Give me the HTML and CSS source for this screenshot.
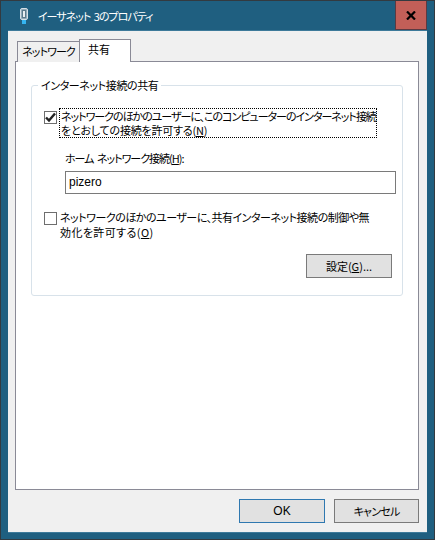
FILE: index.html
```html
<!DOCTYPE html>
<html lang="ja">
<head>
<meta charset="utf-8">
<title>イーサネット 3のプロパティ</title>
<link rel="stylesheet" href="styles.css">
</head>
<body>
<div class="window">
  <header class="titlebar">
    <svg class="app-icon" width="10" height="16" viewBox="0 0 10 16">
      <rect x="1.5" y="0.5" width="7" height="11" rx="1.5" fill="#8fa9b8" stroke="#d5dfe6"/>
      <rect x="3.5" y="2.5" width="3" height="7" fill="#e8eef2" stroke="#5c7a8c"/>
      <rect x="3" y="12" width="4" height="4" fill="#35b4f0"/>
    </svg>
    <span class="title">イーサネット 3のプロパティ</span>
    <button class="close" aria-label="閉じる">
      <svg width="10" height="9" viewBox="0 0 10 9"><path d="M1 0.5 9 8.5M9 0.5 1 8.5" stroke="#000" stroke-width="2.2" fill="none"/></svg>
    </button>
  </header>
  <main class="client">
    <div class="tabs">
      <div class="tab">ネットワーク</div>
      <div class="tab active">共有</div>
    </div>
    <section class="panel">
      <fieldset class="group">
        <legend class="legend">インターネット接続の共有</legend>
        <div class="check-row first">
          <span class="box"><svg width="11" height="11" viewBox="0 0 11 11"><path d="M1 5.5 4 8.5 10 1.5" stroke="#222" stroke-width="2.4" fill="none"/></svg></span>
          <span class="check-label focused"><span class="line-a">ネットワークのほかのユーザーに、このコンピューターのインターネット接続</span><br><span class="line-b">をとおしての接続を許可する(<u>N</u>)</span></span>
        </div>
        <div class="home">
          <div class="field-label">ホーム ネットワーク接続(<u>H</u>):</div>
          <div class="input">pizero</div>
        </div>
        <div class="check-row second">
          <span class="box"></span>
          <span class="check-label"><span class="line-c">ネットワークのほかのユーザーに、共有インターネット接続の制御や無</span><br><span class="line-d">効化を許可する(<u>O</u>)</span></span>
        </div>
        <div class="settings-row">
          <button class="btn settings">設定(<u>G</u>)...</button>
        </div>
      </fieldset>
    </section>
    <footer class="actions">
      <button class="btn ok">OK</button>
      <button class="btn cancel">キャンセル</button>
    </footer>
  </main>
</div>
</body>
</html>
```
FILE: styles.css
```css
* { box-sizing: border-box; }
html, body { margin: 0; padding: 0; }
body {
  width: 435px;
  height: 540px;
  overflow: hidden;
  font-family: "Noto Sans CJK JP", "Noto Sans", sans-serif;
  font-size: 11px;
  font-feature-settings: "palt";
  color: #000;
}
.window {
  width: 435px;
  height: 540px;
  display: flex;
  flex-direction: column;
  background: #1f5f80;
  border: 1px solid #333a40;
  padding: 0 7px 7px;
}
.titlebar {
  height: 30px;
  flex: none;
  display: flex;
  align-items: center;
}
.app-icon { margin-left: 11px; flex: none; }
.title {
  margin-left: 9px;
  color: #fff;
  line-height: 16px;
  letter-spacing: -1px;
  word-spacing: 2px;
}
.close {
  margin-left: auto;
  width: 32px;
  height: 29px;
  align-self: flex-start;
  padding: 0;
  background: #c25f58;
  border: 1px solid #5b3a42;
  border-top: 0;
  display: flex;
  align-items: center;
  justify-content: center;
}
.client {
  flex: 1;
  display: flex;
  flex-direction: column;
  background: #f0f0f0;
  padding: 8px 8px 9px 7px;
  box-shadow: 0 -1px 0 #3d7a9a, 0 1px 0 #3d7a9a;
}
.tabs {
  display: flex;
  align-items: flex-end;
  padding-left: 2px;
  height: 23px;
  flex: none;
  margin-bottom: -1px;
  position: relative;
  z-index: 1;
}
.tab {
  height: 21px;
  width: 62px;
  background: #f0f0f0;
  border: 1px solid #8a8a96;
  border-bottom: 0;
  border-right: 0;
  text-align: center;
  line-height: 19px;
  letter-spacing: -0.9px;
  white-space: nowrap;
}
.tab.active {
  height: 23px;
  width: 52px;
  background: #fff;
  border-right: 1px solid #8a8a96;
  line-height: 18px;
  text-align: left;
  padding-left: 8px;
  letter-spacing: 0;
}
.panel {
  flex: 1;
  background: #fff;
  border: 1px solid #8a8a96;
  padding: 15px 15px 0;
}
.group {
  margin: 0;
  padding: 0 0 17px 12px;
  min-width: 0;
  border: 1px solid #d8e2ea;
  border-radius: 3px;
}
.legend {
  margin-left: -6px;
  padding: 0 3px;
  line-height: 16px;
  letter-spacing: -0.4px;
  white-space: nowrap;
}
.check-row {
  display: flex;
  align-items: flex-start;
}
.check-row.first { margin-top: 15px; }
.check-row.second { margin-top: 16px; }
.box {
  width: 13px;
  height: 13px;
  flex: none;
  margin-top: 3px;
  border: 1px solid #6e6e6e;
  background: #fff;
  display: flex;
  align-items: center;
  justify-content: center;
}
.second .box { margin-top: 2px; }
.check-label {
  margin-left: 2px;
  line-height: 14px;
  padding: 0 0 0 1px;
  white-space: nowrap;
}
.second .check-label {
  line-height: 15px;
  margin-left: 3px;
  padding: 0;
}
.line-a { letter-spacing: -1.03px; }
.line-b { letter-spacing: -0.2px; }
.line-c { letter-spacing: -0.5px; }
.line-d { letter-spacing: 0.4px; }
.focused {
  width: 318px;
  height: 30px;
  border: 1px dotted #000;
}
.home { margin: 12px 7px 0 21px; width: 331px; }
.field-label { line-height: 16px; letter-spacing: -1px; word-spacing: 2px; }
.input {
  margin-top: 5px;
  height: 23px;
  border: 1px solid #7a7a7a;
  padding: 0 3px;
  font-family: "Liberation Sans", sans-serif;
  font-size: 12px;
  line-height: 21px;
  background: #fff;
}
.settings-row {
  display: flex;
  justify-content: flex-end;
  margin: 14px 10px 0 0;
}
.btn {
  font: inherit;
  font-feature-settings: inherit;
  padding: 0;
  height: 24px;
  background: #e1e1e1;
  border: 1px solid #7a7a7a;
  color: #000;
  line-height: 20px;
}
.settings { width: 86px; }
.actions {
  flex: none;
  display: flex;
  justify-content: flex-end;
  gap: 9px;
  margin-top: 9px;
}
.ok { width: 86px; border-color: #2f78b0; font-family: "Liberation Sans", sans-serif; font-size: 12px; }
.cancel { width: 85px; letter-spacing: -0.8px; }
```
